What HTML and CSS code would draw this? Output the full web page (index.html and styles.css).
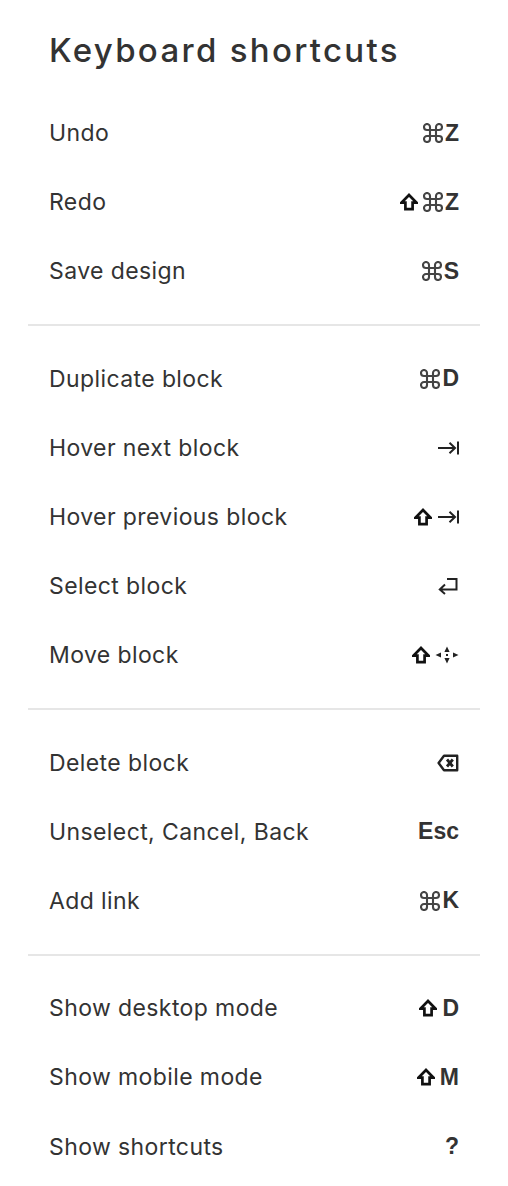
FILE: index.html
```html
<!DOCTYPE html>
<html lang="en">
<head>
<meta charset="utf-8">
<title>Keyboard shortcuts</title>
<link rel="stylesheet" href="styles.css">
</head>
<body>
<div class="panel">
  <h1 class="title">Keyboard shortcuts</h1>

  <section class="group">
    <div class="row"><span class="label">Undo</span><span class="keys">
      <svg class="ico cmd" viewBox="0 0 20 20"><path d="M7 4 V16 M13 4 V16 M4 7 H16 M4 13 H16 M7 4 A3 3 0 1 0 4 7 M13 4 A3 3 0 1 1 16 7 M4 13 A3 3 0 1 0 7 16 M16 13 A3 3 0 1 1 13 16"/></svg><span class="k">Z</span></span></div>
    <div class="row"><span class="label">Redo</span><span class="keys">
      <svg class="ico shift" viewBox="0 0 16 16"><path d="M8 1.8 L14.6 8.6 H11.2 V14.4 H4.8 V8.6 H1.4 Z"/></svg>
      <svg class="ico cmd" viewBox="0 0 20 20"><path d="M7 4 V16 M13 4 V16 M4 7 H16 M4 13 H16 M7 4 A3 3 0 1 0 4 7 M13 4 A3 3 0 1 1 16 7 M4 13 A3 3 0 1 0 7 16 M16 13 A3 3 0 1 1 13 16"/></svg><span class="k">Z</span></span></div>
    <div class="row"><span class="label">Save design</span><span class="keys">
      <svg class="ico cmd" viewBox="0 0 20 20"><path d="M7 4 V16 M13 4 V16 M4 7 H16 M4 13 H16 M7 4 A3 3 0 1 0 4 7 M13 4 A3 3 0 1 1 16 7 M4 13 A3 3 0 1 0 7 16 M16 13 A3 3 0 1 1 13 16"/></svg><span class="k">S</span></span></div>
  </section>

  <section class="group">
    <div class="row"><span class="label">Duplicate block</span><span class="keys">
      <svg class="ico cmd" viewBox="0 0 20 20"><path d="M7 4 V16 M13 4 V16 M4 7 H16 M4 13 H16 M7 4 A3 3 0 1 0 4 7 M13 4 A3 3 0 1 1 16 7 M4 13 A3 3 0 1 0 7 16 M16 13 A3 3 0 1 1 13 16"/></svg><span class="k">D</span></span></div>
    <div class="row"><span class="label">Hover next block</span><span class="keys">
      <svg class="ico tab" viewBox="0 0 22 16"><path d="M1 8 H18 M12.5 2.8 L18 8 L12.5 13.2 M21 1.5 V14.5"/></svg></span></div>
    <div class="row"><span class="label">Hover previous block</span><span class="keys">
      <svg class="ico shift" viewBox="0 0 16 16"><path d="M8 1.8 L14.6 8.6 H11.2 V14.4 H4.8 V8.6 H1.4 Z"/></svg>
      <svg class="ico tab" viewBox="0 0 22 16"><path d="M1 8 H18 M12.5 2.8 L18 8 L12.5 13.2 M21 1.5 V14.5"/></svg></span></div>
    <div class="row"><span class="label">Select block</span><span class="keys">
      <svg class="ico ret" viewBox="0 0 22 18"><path d="M10 2 H19.5 V12.5 H3 M8 7.5 L2.8 12.5 L8 17"/></svg></span></div>
    <div class="row"><span class="label">Move block</span><span class="keys">
      <svg class="ico shift" viewBox="0 0 16 16"><path d="M8 1.8 L14.6 8.6 H11.2 V14.4 H4.8 V8.6 H1.4 Z"/></svg>
      <svg class="ico move" viewBox="0 0 24 18"><path d="M12 0.5 L14.6 6 H9.4 Z M12 17.5 L14.6 12 H9.4 Z M0.5 9 L6 6.4 V11.6 Z M23.5 9 L18 6.4 V11.6 Z M11 8 H13 V10 H11 Z"/></svg></span></div>
  </section>

  <section class="group">
    <div class="row"><span class="label">Delete block</span><span class="keys">
      <svg class="ico del" viewBox="0 0 22 18"><path class="outline" d="M7 1.8 H20.2 V16.2 H7 L1.6 9 Z"/><path class="x" d="M10 5.5 L15.8 12.5 M15.8 5.5 L10 12.5"/></svg></span></div>
    <div class="row"><span class="label">Unselect, Cancel, Back</span><span class="keys"><span class="k">Esc</span></span></div>
    <div class="row"><span class="label">Add link</span><span class="keys">
      <svg class="ico cmd" viewBox="0 0 20 20"><path d="M7 4 V16 M13 4 V16 M4 7 H16 M4 13 H16 M7 4 A3 3 0 1 0 4 7 M13 4 A3 3 0 1 1 16 7 M4 13 A3 3 0 1 0 7 16 M16 13 A3 3 0 1 1 13 16"/></svg><span class="k">K</span></span></div>
  </section>

  <section class="group">
    <div class="row"><span class="label">Show desktop mode</span><span class="keys">
      <svg class="ico shift" viewBox="0 0 16 16"><path d="M8 1.8 L14.6 8.6 H11.2 V14.4 H4.8 V8.6 H1.4 Z"/></svg>
      <span class="k">D</span></span></div>
    <div class="row"><span class="label">Show mobile mode</span><span class="keys">
      <svg class="ico shift" viewBox="0 0 16 16"><path d="M8 1.8 L14.6 8.6 H11.2 V14.4 H4.8 V8.6 H1.4 Z"/></svg>
      <span class="k">M</span></span></div>
    <div class="row"><span class="label">Show shortcuts</span><span class="keys"><span class="k">?</span></span></div>
  </section>
</div>
</body>
</html>
```

FILE: styles.css
```css
html, body {
  margin: 0;
  padding: 0;
  background: #ffffff;
}

.panel {
  width: 452px;
  margin-left: 28px;
  font-family: Inter, "Noto Sans", sans-serif;
  color: #333333;
}

.title {
  margin: 0;
  padding: 30px 0 0 21px;
  height: 68px;
  box-sizing: border-box;
  font-size: 33px;
  font-weight: 500;
  letter-spacing: 2.3px;
  line-height: 40px;
  color: #333333;
}

.group {
  padding: 18px 0 18px 0;
  border-top: 2px solid #e6e6e6;
}

.group:first-of-type {
  border-top: none;
  padding-top: 30.5px;
}

.row {
  height: 69.2px;
  display: flex;
  align-items: center;
  justify-content: space-between;
  padding: 0 21px;
}

.label {
  font-size: 23px;
  letter-spacing: 0.4px;
  color: #333333;
}

.keys {
  display: flex;
  align-items: center;
  gap: 5px;
}

.k {
  font-family: "Liberation Sans", Arial, sans-serif;
  font-weight: 700;
  font-size: 23px;
  line-height: 1;
  color: #333333;
}

.ico {
  display: block;
  fill: none;
  stroke: #111111;
}

.cmd {
  width: 20px;
  height: 20px;
  stroke: #444444;
  stroke-width: 2.1;
  margin-right: -3px;
}

.shift {
  width: 18px;
  height: 18px;
  stroke-width: 2.4;
  stroke-linejoin: miter;
}

.tab {
  width: 22px;
  height: 16px;
  stroke-width: 2;
  stroke: #222222;
}

.ret {
  width: 22px;
  height: 18px;
  stroke-width: 2;
  stroke: #222222;
}

.move {
  width: 24px;
  height: 18px;
  stroke: none;
  fill: #222222;
}

.del {
  width: 22px;
  height: 18px;
}

.del .outline {
  stroke-width: 2.4;
  stroke: #222222;
  stroke-linejoin: round;
}

.del .x {
  stroke-width: 2.8;
  stroke: #222222;
}
```
